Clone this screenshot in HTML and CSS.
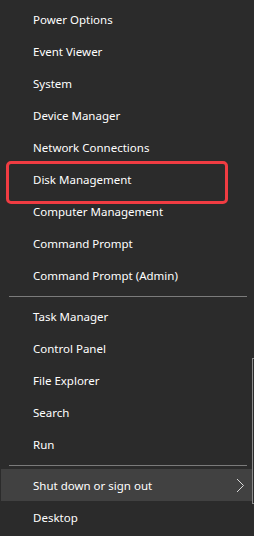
FILE: index.html
```html
<!DOCTYPE html>
<html lang="en">
<head>
    <meta charset="UTF-8">
    <meta name="viewport" content="width=device-width, initial-scale=1.0">
    <title>Quick Link Menu</title>
    <link rel="stylesheet" href="styles.css">
</head>
<body>
    <div class="menu">
        <ul class="menu-group first">
            <li class="menu-item">Power Options</li>
            <li class="menu-item">Event Viewer</li>
            <li class="menu-item">System</li>
            <li class="menu-item">Device Manager</li>
            <li class="menu-item">Network Connections</li>
            <li class="menu-item marked">Disk Management</li>
            <li class="menu-item">Computer Management</li>
            <li class="menu-item">Command Prompt</li>
            <li class="menu-item">Command Prompt (Admin)</li>
        </ul>
        <div class="separator"></div>
        <ul class="menu-group">
            <li class="menu-item">Task Manager</li>
            <li class="menu-item">Control Panel</li>
            <li class="menu-item">File Explorer</li>
            <li class="menu-item">Search</li>
            <li class="menu-item">Run</li>
        </ul>
        <div class="separator"></div>
        <ul class="menu-group">
            <li class="menu-item active">
                Shut down or sign out
                <svg class="chevron" width="9" height="15" viewBox="0 0 9 15">
                    <polyline points="1,1 7.5,7.5 1,14" fill="none" stroke="#d8d8d8" stroke-width="1"/>
                </svg>
            </li>
            <li class="menu-item">Desktop</li>
        </ul>

        <!-- Rand des Untermenüs dahinter -->
        <div class="submenu-edge"></div>
    </div>
</body>
</html>
```

FILE: styles.css
```css
body {
    margin: 0;
    background-color: #2b2b2b;
    font-family: 'Noto Sans', 'Open Sans', sans-serif;
    font-size: 11.5px;
    color: #fff;
}

.menu {
    position: relative;
    width: 254px;
    height: 536px;
    padding-top: 3px;
    box-sizing: border-box;
    overflow: hidden;
}

.menu-group {
    list-style: none;
    margin: 0;
    padding: 0;
}

.menu-item {
    position: relative;
    display: flex;
    align-items: center;
    height: 32px;
    padding-left: 33px;
}

.menu-item.active {
    background-color: #414141;
    margin: 0 2px 0 1px;
    padding-left: 32px;
}

/* Roter Rahmen um Disk Management */
.menu-item.marked::after {
    content: '';
    position: absolute;
    left: 6px;
    top: -2px;
    width: 216px;
    height: 37px;
    border: 3px solid #f03c42;
    border-radius: 5px;
}

.chevron {
    position: absolute;
    right: 7px;
    top: 9px;
}

.separator {
    height: 1px;
    margin: 5px 7px 3px 9px;
    background-color: #7b7b7b;
}

.submenu-edge {
    position: absolute;
    left: 252px;
    top: 358px;
    width: 10px;
    height: 144px;
    border: 1px solid #8c8c8c;
}
```
